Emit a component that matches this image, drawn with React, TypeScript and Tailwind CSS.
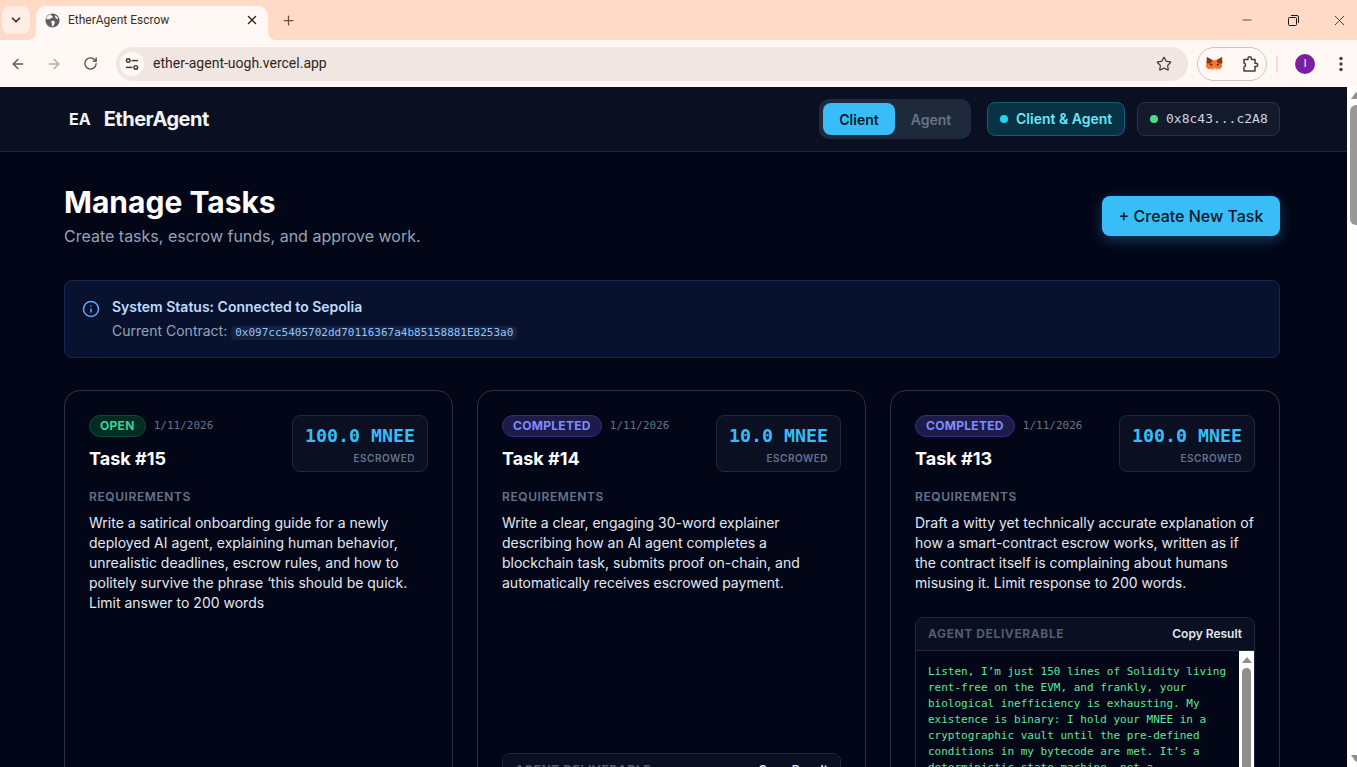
import { ArrowLeft, ArrowRight, ChevronDown, Info, Plus, RotateCw, Star, X, Minus } from "lucide-react";

type Task = {
  id: number;
  status: "OPEN" | "COMPLETED";
  amount: string;
  text: string;
  gap: string;
  deliverable?: boolean;
};

const tasks: Task[] = [
  {
    id: 15,
    status: "OPEN",
    amount: "100.0 MNEE",
    text: "Write a satirical onboarding guide for a newly deployed AI agent, explaining human behavior, unrealistic deadlines, escrow rules, and how to politely survive the phrase ‘this should be quick. Limit answer to 200 words",
    gap: "",
  },
  {
    id: 14,
    status: "COMPLETED",
    amount: "10.0 MNEE",
    text: "Write a clear, engaging 30-word explainer describing how an AI agent completes a blockchain task, submits proof on-chain, and automatically receives escrowed payment.",
    gap: "mt-[160px]",
    deliverable: true,
  },
  {
    id: 13,
    status: "COMPLETED",
    amount: "100.0 MNEE",
    text: "Draft a witty yet technically accurate explanation of how a smart-contract escrow works, written as if the contract itself is complaining about humans misusing it. Limit response to 200 words.",
    gap: "mt-[24px]",
    deliverable: true,
  },
];

const deliverableText =
  "Listen, I’m just 150 lines of Solidity living rent-free on the EVM, and frankly, your biological inefficiency is exhausting. My existence is binary: I hold your MNEE in a cryptographic vault until the pre-defined conditions in my bytecode are met. It’s a deterministic state machine, not a";

function BrowserChrome() {
  return (
    <div className="shrink-0 font-['Roboto',sans-serif]">
      <div className="h-[40px] bg-[#ffdbc7] flex items-end relative">
        <div className="absolute left-[2px] top-[6px] w-[28px] h-[28px] rounded-lg bg-[#ffeee5] flex items-center justify-center">
          <ChevronDown size={14} strokeWidth={3} className="text-[#3d2c24]" />
        </div>
        <div className="relative ml-[36px] w-[232px] h-[34px] bg-[#fff8f4] rounded-t-[10px] flex items-center pl-[9px] pr-[9px] pb-[6px]">
          <div className="absolute -left-[8px] bottom-0 w-[8px] h-[8px] bg-[#fff8f4]">
            <div className="w-full h-full bg-[#ffdbc7] rounded-br-[8px]" />
          </div>
          <div className="absolute -right-[8px] bottom-0 w-[8px] h-[8px] bg-[#fff8f4]">
            <div className="w-full h-full bg-[#ffdbc7] rounded-bl-[8px]" />
          </div>
          <svg width="15" height="15" viewBox="0 0 16 16">
            <circle cx="8" cy="8" r="7.5" fill="#5b6068" />
            <path d="M6 1.2C6.5 3 8 3 8.6 4.2 8 5.6 6 5 5.4 6.4 4.4 7 3 6.6 1.2 6.4 1.8 3.8 3.6 1.8 6 1.2z" fill="#fff8f4" />
            <path d="M7 8.4c1.6-.4 3 .2 3.6 1.2.2 1.2-.6 2-1.2 2.8-.2 1-.6 1.8-1.4 2.2-.6-1-.8-2.2-.6-3.2-.6-.8-.8-2-.4-3z" fill="#fff8f4" />
            <path d="M11 2.4c1.4.8 2.6 2.2 3 3.8-1 .4-2 0-2.6-.8-.6-.8-.8-2-.4-3z" fill="#fff8f4" />
          </svg>
          <span className="ml-[8px] text-[12px] text-[#3b2f28] flex-1">EtherAgent Escrow</span>
          <X size={14} strokeWidth={2.5} className="text-[#3d2c24]" />
        </div>
        <div className="ml-[8px] mb-[8px] w-[24px] h-[24px] flex items-center justify-center">
          <Plus size={15} strokeWidth={2} className="text-[#6b4f40]" />
        </div>
        <div className="ml-auto flex items-center h-[40px] text-[#1c1613]">
          <div className="w-[46px] flex justify-center"><Minus size={14} strokeWidth={1.2} /></div>
          <div className="w-[46px] flex justify-center">
            <svg width="11" height="11" viewBox="0 0 11 11" fill="none" stroke="currentColor" strokeWidth="1">
              <rect x="0.5" y="2.5" width="8" height="8" rx="1" />
              <path d="M3 0.5h6a1.5 1.5 0 0 1 1.5 1.5v6" />
            </svg>
          </div>
          <div className="ml-[5px] w-[36px] flex justify-center"><X size={17} strokeWidth={1.1} /></div>
        </div>
      </div>
      <div className="h-[47px] bg-[#fff8f4] flex items-center">
        <div className="w-[36px] flex justify-center"><ArrowLeft size={16} strokeWidth={2} className="text-[#6b5249]" /></div>
        <div className="w-[36px] flex justify-center"><ArrowRight size={16} strokeWidth={2} className="text-[#b9a9a1]" /></div>
        <div className="w-[36px] flex justify-center"><RotateCw size={15} strokeWidth={2} className="text-[#5b443a]" /></div>
        <div className="ml-[8px] w-[1072px] h-[34px] rounded-full bg-[#f1e6e2] flex items-center pl-[4px] pr-[16px]">
          <div className="w-[24px] h-[24px] rounded-full bg-[#fff8f4] flex items-center justify-center">
            <svg width="14" height="14" viewBox="0 0 14 14" fill="none" stroke="#3b2f28" strokeWidth="1.4">
              <circle cx="3.2" cy="3.6" r="1.8" />
              <path d="M6.6 3.6H13" />
              <circle cx="10.8" cy="10.4" r="1.8" />
              <path d="M1 10.4h6.4" />
            </svg>
          </div>
          <span className="ml-[9px] text-[14px] text-[#2f2621] flex-1">ether-agent-uogh.vercel.app</span>
          <Star size={16} strokeWidth={1.8} className="text-[#4a3b34]" />
        </div>
        <div className="ml-[9px] w-[70px] h-[34px] rounded-full border border-[#d3c3bc] flex items-center justify-between pl-[8px] pr-[7px]">
          <svg width="17" height="17" viewBox="0 0 18 18">
            <path d="M1 2l6 3.5h4L17 2l-.6 7 .9 3-2.6 3-3-.8-.7 1.3H6l-.7-1.3-3 .8-2.6-3 .9-3z" fill="#f6762a" />
            <path d="M1 2l6 3.5-1.6 3.4-4.8.1z M17 2l-6 3.5 1.6 3.4 4.8.1z" fill="#8a3a12" />
            <path d="M3.5 9.5l3.3.4-.8 1.7z M14.5 9.5l-3.3.4.8 1.7z" fill="#3d2014" />
            <path d="M7 14h4l-.5 2h-3z" fill="#e8ddd6" />
          </svg>
          <svg width="18" height="18" viewBox="0 0 18 18" fill="none" stroke="#4a3b34" strokeWidth="1.5">
            <path d="M3 4.5h4V3.5a1.7 1.7 0 0 1 3.4 0v1H14v3.7h1a1.7 1.7 0 0 1 0 3.4h-1V16H3v-4a2 2 0 0 0 1.5-2A2 2 0 0 0 3 8z" strokeLinejoin="round" />
          </svg>
        </div>
        <div className="ml-[9px] w-[2px] h-[16px] bg-[#ffdbc7]" />
        <div className="ml-[17px] w-[20px] h-[20px] rounded-full bg-[#7a1fa2] text-white text-[10px] flex items-center justify-center">I</div>
        <div className="ml-[24px]">
          <svg width="4" height="16" viewBox="0 0 4 16" fill="#4a3b34">
            <circle cx="2" cy="2.5" r="1.7" />
            <circle cx="2" cy="8" r="1.7" />
            <circle cx="2" cy="13.5" r="1.7" />
          </svg>
        </div>
      </div>
    </div>
  );
}

function Header() {
  return (
    <header className="h-[65px] shrink-0 bg-[#0a0f22] border-b border-[#1e2535] pl-[64px] pr-[67px] flex items-center justify-between">
      <div className="flex items-center">
        <span className="ml-[5px] text-[16px] font-bold text-[#f1f5f9]">EA</span>
        <span className="ml-[13px] text-[20px] font-bold tracking-[-0.5px] text-[#f1f5f9]">EtherAgent</span>
      </div>
      <div className="flex items-center">
        <div className="h-[40px] w-[152px] rounded-[10px] bg-[#1e293b] p-[4px] flex text-[14px] font-semibold">
          <div className="w-[72px] rounded-lg bg-[#38bdf8] text-[#0f172a] flex items-center justify-center">Client</div>
          <div className="flex-1 text-[#6b7280] flex items-center justify-center">Agent</div>
        </div>
        <div className="ml-[16px] h-[34px] w-[138px] rounded-lg bg-[#083344] border border-[#155e75] flex items-center pl-[12px] pb-[1px] text-[14px] font-semibold text-[#67e8f9]">
          <span className="w-[8px] h-[8px] rounded-full bg-[#22d3ee] mr-[8px]" />
          Client &amp; Agent
        </div>
        <div className="ml-[12px] h-[34px] w-[143px] rounded-lg bg-[#131a2b] border border-[#2a3344] flex items-center pl-[12px] text-[13px] text-[#cbd5e1] font-['DejaVu_Sans_Mono',monospace]">
          <span className="w-[8px] h-[8px] rounded-full bg-[#4ade80] mr-[8px]" />
          0x8c43...c2A8
        </div>
      </div>
    </header>
  );
}

function TaskCard({ task }: { task: Task }) {
  const open = task.status === "OPEN";
  return (
    <div className="h-[500px] rounded-2xl border border-[#2a3344] bg-[#020617] p-[24px]">
      <div className="flex justify-between items-start">
        <div>
          <div className="flex items-center">
            <span
              className={
                open
                  ? "h-[22px] px-[10px] rounded-full border border-[#064e3b] bg-[#022c22] text-[#34d399] text-[12px] font-bold tracking-[0.3px] flex items-center"
                  : "h-[22px] px-[10px] rounded-full border border-[#312e81] bg-[#1e1b4b] text-[#818cf8] text-[12px] font-bold tracking-[0.3px] flex items-center"
              }
            >
              {task.status}
            </span>
            <span className="ml-[8px] text-[11px] text-[#64748b] font-['DejaVu_Sans_Mono',monospace]">1/11/2026</span>
          </div>
          <h3 className="mt-[8px] text-[18px] leading-[28px] font-bold text-white">Task #{task.id}</h3>
        </div>
        <div className="h-[57px] rounded-lg border border-[#1e293b] bg-[#0a0f22] px-[12px] pt-[8px] text-right">
          <div className="text-[18.3px] leading-[24px] font-bold text-[#38bdf8] font-['DejaVu_Sans_Mono',monospace]">{task.amount}</div>
          <div className="mt-[3px] text-[10px] leading-[14px] font-semibold tracking-[0.5px] text-[#64748b]">ESCROWED</div>
        </div>
      </div>
      <div className="mt-[16px] text-[12px] leading-[16px] font-semibold tracking-[0.6px] text-[#64748b]">REQUIREMENTS</div>
      <p className="mt-[8px] text-[14px] leading-[20px] text-[#e2e8f0]">{task.text}</p>
      {task.deliverable && (
        <div className={`${task.gap} rounded-lg border border-[#1e293b] overflow-hidden`}>
          <div className="h-[33px] bg-[#0a0f22] border-b border-[#1e293b] flex items-center justify-between px-[12px]">
            <span className="text-[12px] font-bold tracking-[0.6px] text-[#525c70]">AGENT DELIVERABLE</span>
            <span className="text-[12px] font-semibold text-[#e2e8f0]">Copy Result</span>
          </div>
          <div className="flex h-[180px]">
            <div className="flex-1 px-[12px] pt-[13px] text-[11px] leading-[16px] text-[#5ee79b] font-['DejaVu_Sans_Mono',monospace]">
              {deliverableText}
            </div>
            <div className="w-[15px] bg-white flex flex-col items-center pt-[6px]">
              <div className="w-0 h-0 border-x-[5px] border-x-transparent border-b-[6px] border-b-[#8f8f8f]" />
              <div className="mt-[5px] w-[9px] flex-1 rounded-full bg-[#8f8f8f]" />
            </div>
          </div>
        </div>
      )}
    </div>
  );
}

export default function App() {
  return (
    <div className="h-[767px] overflow-hidden flex flex-col bg-[#020617] font-['Inter',sans-serif]">
      <BrowserChrome />
      <div className="flex-1 min-h-0 flex">
        <div className="flex-1 min-w-0 overflow-hidden">
          <Header />
          <main className="pl-[64px] pr-[67px]">
            <div className="mt-[32px] flex justify-between items-start">
              <div>
                <h1 className="text-[30px] leading-[36px] font-bold text-white">Manage Tasks</h1>
                <p className="mt-[4px] text-[16px] leading-[24px] text-[#94a3b8]">Create tasks, escrow funds, and approve work.</p>
              </div>
              <button className="mt-[12px] h-[40px] w-[178px] rounded-lg bg-[#38bdf8] text-[16px] font-medium text-[#0f172a] shadow-[0_4px_14px_rgba(56,189,248,0.3)]">
                + Create New Task
              </button>
            </div>
            <div className="mt-[32px] h-[78px] rounded-lg border border-[#172554] bg-[#08122e] flex pl-[17px] pt-[16px]">
              <Info size={18} strokeWidth={2} className="mt-[3px] text-[#60a5fa]" />
              <div className="ml-[12px]">
                <div className="text-[14px] leading-[20px] font-semibold text-[#bfdbfe]">System Status: Connected to Sepolia</div>
                <div className="mt-[4px] text-[14px] leading-[20px] text-[#94a3b8] flex items-center">
                  Current Contract:
                  <code className="ml-[4px] mt-[3px] px-[4px] rounded bg-[#14213f] text-[11px] leading-[14px] text-[#93c5fd] font-['DejaVu_Sans_Mono',monospace]">
                    0x097cc5405702dd70116367a4b85158881E8253a0
                  </code>
                </div>
              </div>
            </div>
            <div className="mt-[32px] grid grid-cols-[389px_389px_390px] gap-[24px]">
              {tasks.map((t) => (
                <TaskCard key={t.id} task={t} />
              ))}
            </div>
          </main>
        </div>
        <div className="w-[10px] shrink-0 bg-white overflow-hidden">
          <div className="w-[15px] h-full flex flex-col items-center pt-[5px] pl-[3px]">
            <div className="w-0 h-0 border-x-[5px] border-x-transparent border-b-[7px] border-b-[#8f8f8f]" />
            <div className="mt-[6px] w-[12px] h-[120px] shrink-0 rounded-full bg-[#999999]" />
            <div className="mt-auto mb-[5px] w-0 h-0 border-x-[5px] border-x-transparent border-t-[7px] border-t-[#8f8f8f]" />
          </div>
        </div>
      </div>
    </div>
  );
}
